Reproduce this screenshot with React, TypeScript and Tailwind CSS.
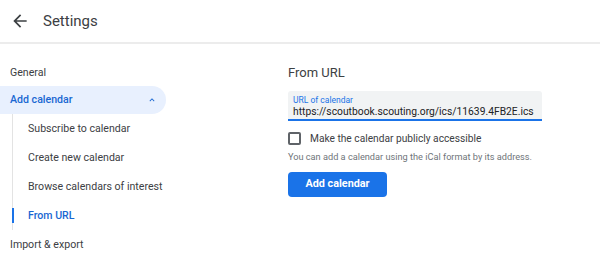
import React from "react";

export default function App() {
  const font = { fontFamily: "Roboto, 'Noto Sans', Arial, sans-serif" };
  return (
    <div className="w-[600px] h-[273px] bg-white overflow-hidden text-[#3c4043]" style={font}>
      <div className="h-[44px] flex items-center border-b-2 border-[#ececec]">
        <div className="pl-[10px] w-[43px] flex items-center">
          <svg width="20" height="20" viewBox="0 0 24 24" className="text-[#3c4043]">
            <path d="M20 11H7.83l5.59-5.59L12 4l-8 8 8 8 1.41-1.41L7.83 13H20v-2z" fill="currentColor" />
          </svg>
        </div>
        <div className="text-[15px] text-[#3c4043] leading-none pt-[1px]">Settings</div>
      </div>
      <div className="flex">
        <div className="w-[166px] shrink-0 pt-[15px] whitespace-nowrap">
          <div className="h-[27px] flex items-center pl-[10px] text-[10.6px] text-[#3c4043]">General</div>
          <div className="h-[28px] flex items-center justify-between pl-[10px] pr-[9px] bg-[#e8f0fe] rounded-r-full text-[10.6px] font-medium text-[#1967d2]">
            <span>Add calendar</span>
            <svg width="10" height="10" viewBox="0 0 24 24">
              <path d="M7.41 15.41L12 10.83l4.59 4.58L18 14l-6-6-6 6z" fill="currentColor" />
            </svg>
          </div>
          <div className="ml-[12px] border-l border-[#e3e3e3] flex flex-col">
            <div className="h-[29px] flex items-center pl-[15px] text-[10.6px] text-[#3c4043]">Subscribe to calendar</div>
            <div className="h-[29px] flex items-center pl-[15px] text-[10.6px] text-[#3c4043]">Create new calendar</div>
            <div className="h-[29px] flex items-center pl-[15px] text-[10.6px] text-[#3c4043]">Browse calendars of interest</div>
            <div className="h-[29px] flex items-center relative pl-[15px] text-[10.6px] font-medium text-[#1967d2]">
              <div className="absolute left-[-1px] top-[7px] w-[2px] h-[15px] bg-[#1a73e8]" />
              From URL
            </div>
          </div>
          <div className="h-[29px] flex items-center pl-[10px] text-[10.6px] text-[#3c4043]">Import &amp; export</div>
        </div>
        <div className="pl-[122px] pt-[22px] flex flex-col whitespace-nowrap">
          <div className="text-[13px] text-[#3c4043] leading-none h-[13px]">From URL</div>
          <div className="mt-[12px] w-[254px] h-[30px] bg-[#f1f3f4] rounded-t-[3px] border-b-2 border-[#1a73e8] px-[5px] pt-[4px] flex flex-col">
            <div className="text-[8.5px] leading-[10px] text-[#1a73e8]">URL of calendar</div>
            <div className="text-[10.3px] leading-[13px] text-[#202124]">https://scoutbook.scouting.org/ics/11639.4FB2E.ics</div>
          </div>
          <div className="mt-[11px] h-[13px] flex items-center">
            <div className="w-[13px] h-[13px] border-2 border-[#5f6368] rounded-[2px]" />
            <div className="ml-[9px] text-[10.2px] text-[#3c4043]">Make the calendar publicly accessible</div>
          </div>
          <div className="mt-[6px] h-[12px] leading-[12px] text-[9.2px] text-[#70757a]">You can add a calendar using the iCal format by its address.</div>
          <div className="mt-[9px] w-[99px] h-[25px] bg-[#1a73e8] rounded-[4px] flex items-center justify-center text-white text-[10.8px] font-bold">Add calendar</div>
        </div>
      </div>
    </div>
  );
}
